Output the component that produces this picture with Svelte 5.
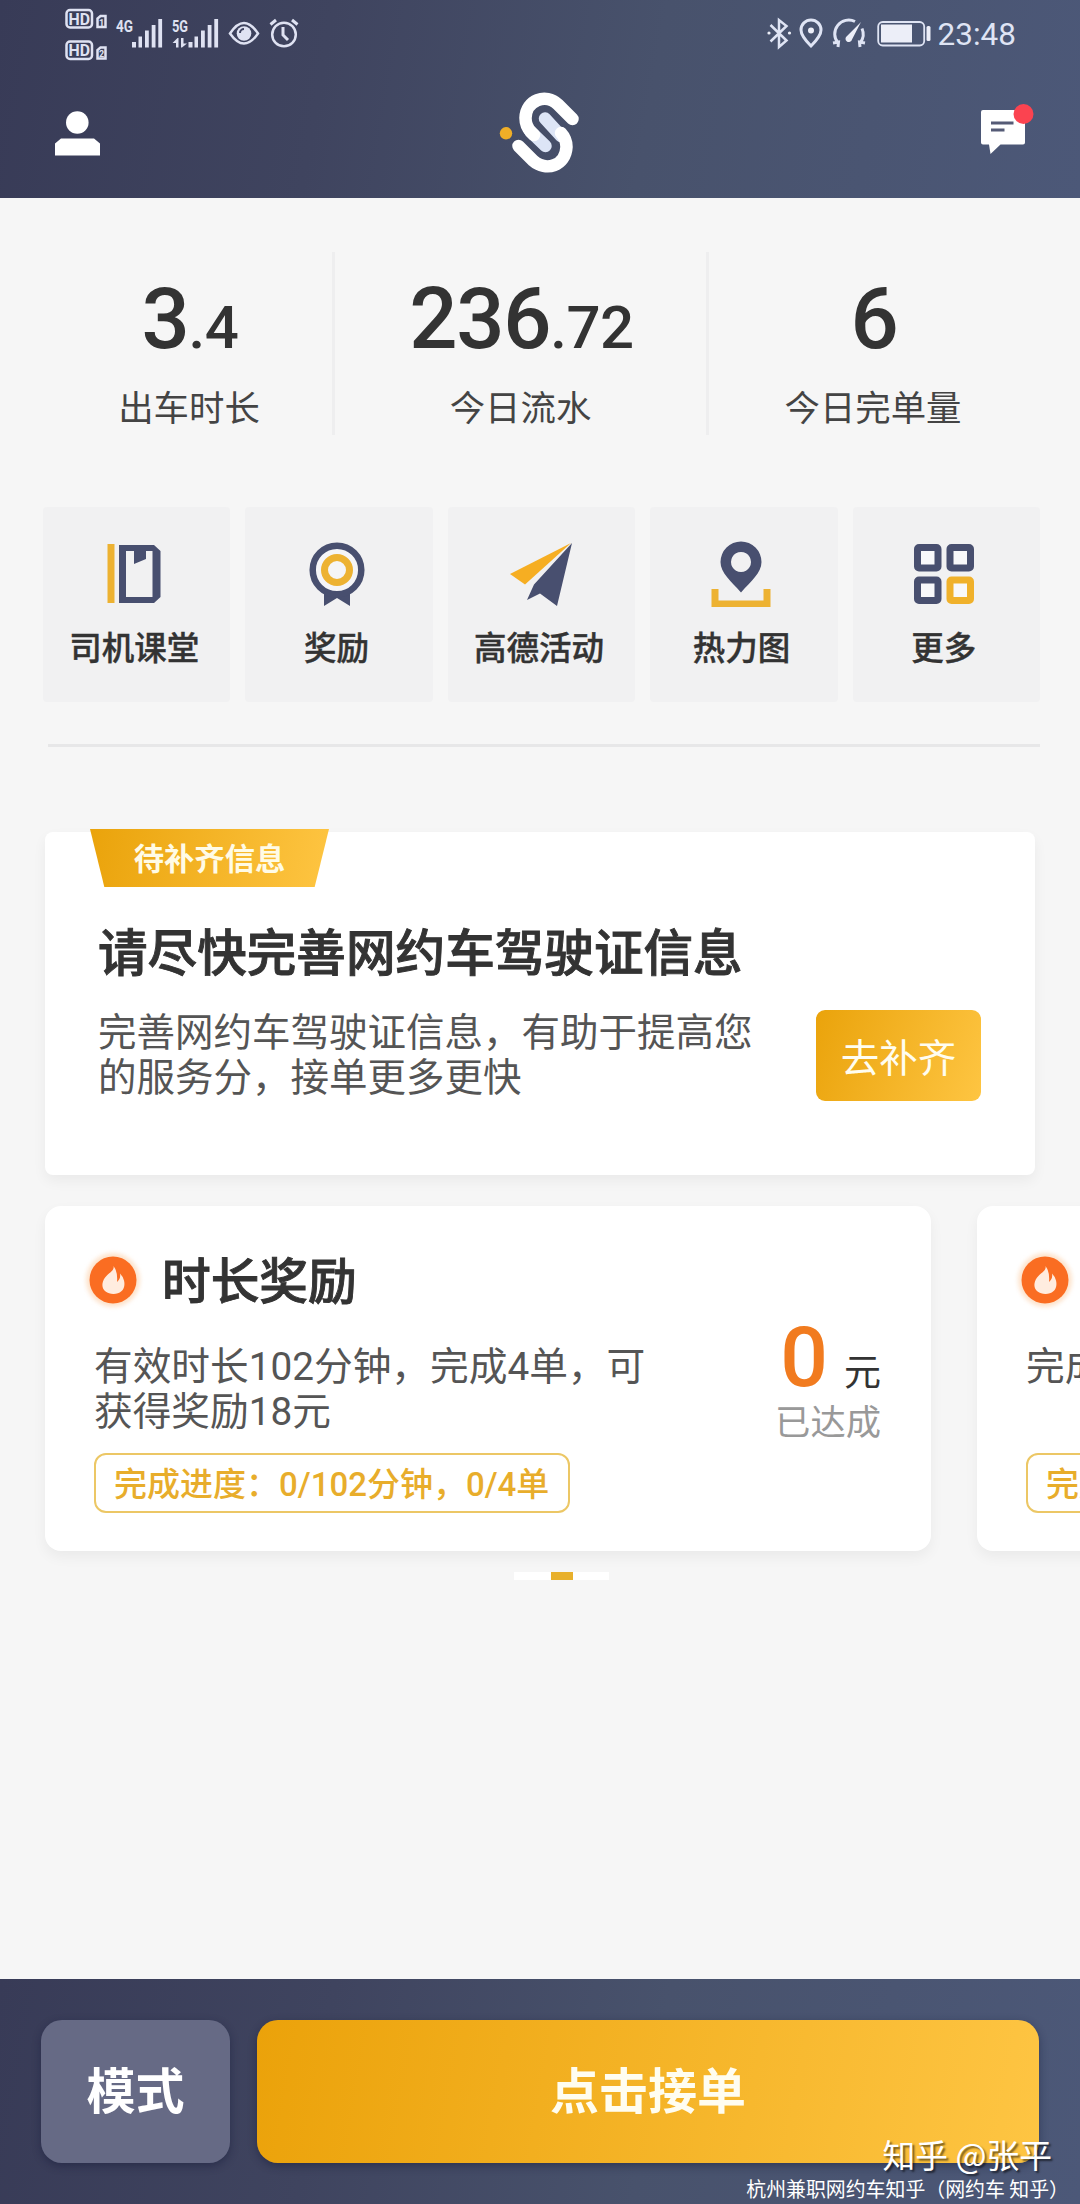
<script>
  const stats = [
    { whole: '3', rest: '.4', label: '出车时长' },
    { whole: '236', rest: '.72', label: '今日流水' },
    { whole: '6', rest: '', label: '今日完单量' }
  ];

  const menu = [
    { icon: 'book', name: '司机课堂' },
    { icon: 'award', name: '奖励' },
    { icon: 'plane', name: '高德活动' },
    { icon: 'heat', name: '热力图' },
    { icon: 'more', name: '更多' }
  ];

  const rewards = [
    {
      title: '时长奖励',
      lines: ['有效时长102分钟，完成4单，可', '获得奖励18元'],
      progress: '完成进度：0/102分钟，0/4单',
      amount: '0'
    },
    {
      title: '',
      lines: ['完成'],
      progress: '完成',
      amount: ''
    }
  ];
</script>

<div class="app">
  <header>
    <div class="status">
      <svg class="status-left" width="240" height="64" viewBox="62 0 240 64">
        <g fill="none" stroke="#dfe2f2" stroke-width="2.500">
          <rect x="66.500" y="10" width="25.500" height="17.500" rx="3.500" />
          <rect x="66.500" y="41.500" width="25.500" height="17.500" rx="3.500" />
          <path d="M97.500 27V18.500l3-2.500h5V27zM97.500 58.500V50l3-2.500h5v11z" />
        </g>
        <g fill="#dfe2f2" font-family="Roboto, sans-serif" font-weight="700">
          <text x="68.500" y="24.500" font-size="16" textLength="21.500" lengthAdjust="spacingAndGlyphs">HD</text>
          <text x="68.500" y="56" font-size="16" textLength="21.500" lengthAdjust="spacingAndGlyphs">HD</text>
          <text x="99" y="25.500" font-size="9">1</text>
          <text x="99" y="57" font-size="9">2</text>
          <text x="116" y="32" font-size="17" textLength="17" lengthAdjust="spacingAndGlyphs">4G</text>
          <text x="172" y="32" font-size="17" textLength="16" lengthAdjust="spacingAndGlyphs">5G</text>
        </g>
        <g fill="#dfe2f2">
          <path d="M132 42h4v5.500h-4zM138.500 36.500h3.500v11h-3.500zM145 30.500h3.800v17H145zM151.700 25h3.800v22.500h-3.800zM158.300 19h3.800v28.500h-3.800z" />
          <path d="M188.500 42h4v5.500h-4zM194.500 36.500h3.500v11h-3.500zM201 30.500h3.800v17H201zM207.700 25h3.800v22.500h-3.800zM214.300 19h3.800v28.500h-3.800z" />
          <path d="M176 47.500V43h-3.500l5-5h1v9.500zM181 38h2.500v5.500h3.500l-5 4h-1z" />
        </g>
        <g fill="none" stroke="#dfe2f2" stroke-width="2.500">
          <path d="M230 33.500q14-21 28 0q-14 20-28 0z" />
          <circle cx="284" cy="34.500" r="11.800" />
          <path d="M283 27v8l5 5M270.500 24.500l5.500-4.500M292 20l5.500 4.500" stroke-width="3" />
        </g>
        <circle cx="244" cy="33.500" r="7.300" fill="#dfe2f2" />
        <path d="M240 33a4 4 0 0 1 4-4" fill="none" stroke="#414562" stroke-width="2" />
      </svg>
      <div class="status-right">
        <svg width="166" height="64" viewBox="765 0 166 64">
          <g fill="none" stroke="#dfe4f4" stroke-width="2.500">
            <path d="M769.500 25l16 15.500-7.500 6.500V20l7.500 6-16 15.500" />
            <path d="M810 46q-10-10-10-16a10 10 0 0 1 20 0q0 6-10 16z" stroke-width="3" />
            <path d="M837 47l.5-5-5.500 1M837 43a14 14 0 0 1 17-21.500M861 28.500a14 14 0 0 1-2 14.500M859 47l-.5-5 5.500 1" stroke-width="3" />
            <rect x="877.200" y="22" width="46" height="23.500" rx="4.500" stroke-width="1.800" />
          </g>
          <g fill="#eceef8">
            <circle cx="768" cy="33" r="1.600" />
            <circle cx="788.500" cy="33" r="1.600" />
            <circle cx="810" cy="30.500" r="3" />
            <path d="M860 22l-9 17.500a3.300 3.300 0 1 1-5-3.500z" />
            <rect x="880" y="24.500" width="31" height="18" />
            <rect x="925.500" y="26" width="4" height="15" rx="1.500" />
          </g>
        </svg>
        <span class="clock">23:48</span>
      </div>
    </div>
    <nav>
      <svg class="user" width="46" height="46" viewBox="55 110 46 46" fill="#fff">
        <circle cx="77.300" cy="121.500" r="11.300" />
        <path d="M55 154.500v-12l6-5h33l6 5v12z" />
      </svg>
      <svg class="logo" width="82" height="84" viewBox="498 91 82 84">
        <circle cx="506" cy="133.300" r="6.200" fill="#f0ae27" />
        <g fill="none" stroke-width="12.500" stroke-linecap="round" stroke-linejoin="round">
          <path d="M545 118.500L561 136" stroke="#dde5f6" />
          <path d="M530 131L545.500 146" stroke="#dde5f6" />
          <path d="M572.500 119L558 104.500C546 93 526 100 525.500 118Q525.500 126 531 132L534 135" stroke="#fff" />
          <path d="M518.500 146L533 160.500C546 172 565.500 166 566.500 147Q566.500 139 561 133" stroke="#fff" />
        </g>
      </svg>
      <svg class="message" width="54" height="52" viewBox="980 104 54 52">
        <path d="M983 110h40a2 2 0 0 1 2 2v30.500a2 2 0 0 1-2 2h-22.500l-10 9.500-1.500-9.500h-6a2 2 0 0 1-2-2V112a2 2 0 0 1 2-2z" fill="#fff" />
        <path d="M991 123h22.500M991 130h13.500" stroke="#555b76" stroke-width="3" />
        <circle cx="1023.500" cy="114" r="10" fill="#fb4350" />
      </svg>
    </nav>
  </header>

  <main>
    <section class="stats">
      {#each stats as stat}
        <div class="stat">
          <div class="number">{stat.whole}<small>{stat.rest}</small></div>
          <p>{stat.label}</p>
        </div>
      {/each}
    </section>

    <section class="menu">
      {#each menu as item}
        <div class="menu-item">
          <svg width="68" height="68" viewBox="0 0 68 68">
            {#if item.icon === 'book'}
              <path d="M7.500 5h7v59h-7z" fill="#edb232" />
              <path d="M19 6h35l6.500 6v46L54 64H19zM26 12v46h26.500V12H46v8l-12 5V12z" fill="#484f6f" fill-rule="evenodd" />
            {:else if item.icon === 'award'}
              <path d="M21 50v17l13-8 13 8V50z" fill="#484f6f" />
              <circle cx="34" cy="31" r="24.300" fill="#f5f5f7" stroke="#484f6f" stroke-width="6.500" />
              <circle cx="34" cy="31" r="12.500" fill="none" stroke="#edb232" stroke-width="7" />
            {:else if item.icon === 'plane'}
              <path d="M5 35L66 4 20 45.500z" fill="#f6ae22" />
              <path d="M67 4L52 67 35 54.500 22 61l7-15.500z" fill="#484f6f" />
            {:else if item.icon === 'heat'}
              <path d="M34 53.500C24 42 13.500 34 13.500 23a20.500 20.500 0 0 1 41 0C54.500 34 44 42 34 53.500zM34 13a10 10 0 1 0 .01 0z" fill="#484f6f" fill-rule="evenodd" />
              <path d="M8 50v15h52V50" fill="none" stroke="#edb232" stroke-width="7" />
            {:else}
              <g fill="#f8f8fa" stroke="#484f6f" stroke-width="7">
                <rect x="7.500" y="8.500" width="20.500" height="20.500" rx="1.500" />
                <rect x="40" y="8.500" width="20.500" height="20.500" rx="1.500" />
                <rect x="7.500" y="41" width="20.500" height="20.500" rx="1.500" />
                <rect x="40" y="41" width="20.500" height="20.500" rx="1.500" stroke="#f0b12b" />
              </g>
            {/if}
          </svg>
          <span>{item.name}</span>
        </div>
      {/each}
    </section>

    <section class="notice">
      <div class="ribbon">待补齐信息</div>
      <h2>请尽快完善网约车驾驶证信息</h2>
      <div class="notice-row">
        <p>完善网约车驾驶证信息，有助于提高您<br />的服务分，接单更多更快</p>
        <button class="fill-in">去补齐</button>
      </div>
    </section>

    <section class="rewards">
      {#each rewards as reward}
        <article class="reward">
          <div class="reward-text">
            <h3>
              <svg width="64" height="64" viewBox="0 0 64 64">
                <circle class="glow" cx="32" cy="32" r="27" fill="#fde3cc" />
                <circle cx="32" cy="32" r="23.500" fill="#fa6d22" />
                <path d="M32.500 18C34 24 25 25 22 33.500 19.500 41 25 46 32.500 46S45 41 43 32.500Q42 28.500 39 25.500 40 31 36 34 37 24 32.500 18z" fill="#ffecdf" />
              </svg>
              <span>{reward.title}</span>
            </h3>
            <p>
              {#each reward.lines as line}
                <span>{line}</span>
              {/each}
            </p>
            <div class="progress" class:cut={!reward.amount}>{reward.progress}</div>
          </div>
          {#if reward.amount}
            <div class="amount">
              <div><b>{reward.amount}</b><span>元</span></div>
              <small>已达成</small>
            </div>
          {/if}
        </article>
      {/each}
    </section>
    <div class="pager"><i></i></div>
  </main>

  <footer>
    <button class="mode">模式</button>
    <button class="start">点击接单</button>
    <div class="watermark">
      <span class="author">知乎 @张平</span>
      <span class="source">杭州兼职网约车知乎（网约车 知乎）</span>
    </div>
  </footer>
</div>

<style>
  :global(body) {
    margin: 0;
    background: #f6f6f6;
  }

  .app {
    width: 1080px;
    height: 2204px;
    display: flex;
    flex-direction: column;
    overflow: hidden;
    background: #f6f6f6;
    color: #333;
    font-family: Roboto, 'Noto Sans CJK SC', sans-serif;
  }

  h2, h3, p {
    margin: 0;
    font-weight: 500;
  }

  h2, h3 {
    -webkit-text-stroke: 0.9px #333;
  }

  svg {
    display: block;
    flex-shrink: 0;
  }

  button {
    border: 0;
    padding: 0;
    color: #fffdf0;
    font-family: inherit;
  }

  header {
    height: 198px;
    flex-shrink: 0;
    background: linear-gradient(100deg, #383b57 0%, #3f445f 30%, #48526c 60%, #4c5878 100%);
  }

  .status {
    height: 64px;
    display: flex;
    justify-content: space-between;
    padding: 0 64px 0 62px;
  }

  .status-right {
    display: flex;
    gap: 6px;
  }

  .clock {
    color: #dfe4f4;
    font-size: 31.5px;
    line-height: 69px;
  }

  nav {
    height: 134px;
    display: grid;
    grid-template-columns: 1fr 82px 1fr;
    align-items: center;
    padding: 0 46px 0 55px;
  }

  .user {
    margin-top: 5px;
  }

  .logo {
    margin: 3px 0 0 -6px;
  }

  .message {
    justify-self: end;
    margin-top: -2px;
  }

  main {
    height: 1781px;
    flex-shrink: 0;
    overflow: hidden;
  }

  .stats {
    height: 181px;
    display: grid;
    grid-template-columns: 288px 374px 331px;
    padding: 54px 0 0 46px;
    text-align: center;
  }

  .stat + .stat {
    border-left: 3px solid #eeeeef;
    margin-left: -2px;
  }

  .number {
    height: 106px;
    padding-top: 14px;
    box-sizing: border-box;
    font-size: 85px;
    font-weight: 500;
    line-height: 106px;
    letter-spacing: -1.3px;
  }

  .number small {
    font-size: 60px;
    letter-spacing: -0.5px;
  }

  .stat p {
    margin-top: 25px;
    margin-right: 2px;
    color: #444;
    font-size: 35.4px;
    font-weight: 400;
    line-height: 52px;
  }

  .menu {
    display: grid;
    grid-template-columns: repeat(5, 1fr);
    gap: 15px;
    margin: 74px 40px 0 43px;
  }

  .menu-item {
    height: 195px;
    display: flex;
    flex-direction: column;
    align-items: center;
    box-sizing: border-box;
    padding: 32px 5px 0 0;
    background: #f1f1f2;
    border-radius: 4px;
  }

  .menu-item span {
    margin-top: 18px;
    font-size: 32.5px;
    font-weight: 500;
    line-height: 48px;
    -webkit-text-stroke: 0.4px #333;
  }

  .notice {
    height: 343px;
    margin: 130px 45px 0;
    box-sizing: border-box;
    padding: 0 54px 0 53px;
    position: relative;
    background: #fff;
    border-radius: 8px;
    box-shadow: 0 6px 14px rgba(0, 0, 0, 0.05);
  }

  /* separator between the shortcuts and the cards */
  .notice::before {
    content: '';
    position: absolute;
    left: 3px;
    right: -5px;
    top: -88px;
    height: 3px;
    background: #e7e7e8;
  }

  .ribbon {
    width: 239px;
    height: 58px;
    position: absolute;
    top: -3px;
    left: 45px;
    clip-path: polygon(0 0, 100% 0, 94% 100%, 6% 100%);
    background: linear-gradient(100deg, #eaa30b, #fec542);
    color: #fffbe6;
    font-size: 30.3px;
    font-weight: 700;
    line-height: 62px;
    text-align: center;
  }

  h2 {
    padding-top: 86px;
    font-size: 49.6px;
    line-height: 72px;
  }

  .notice-row {
    display: flex;
    justify-content: space-between;
    margin-top: 20px;
  }

  .notice-row p, .reward p {
    color: #555;
    font-size: 38.5px;
    font-weight: 400;
    line-height: 45px;
  }

  .fill-in {
    width: 165px;
    height: 91px;
    padding-bottom: 2px;
    background: linear-gradient(110deg, #eaa30b, #fec542);
    border-radius: 9px;
    font-size: 38.5px;
  }

  .rewards {
    display: flex;
    gap: 46px;
    margin: 31px 0 0 45px;
  }

  .reward {
    width: 886px;
    height: 345px;
    flex-shrink: 0;
    display: flex;
    justify-content: space-between;
    box-sizing: border-box;
    padding: 42px 50px 0 49px;
    background: #fff;
    border-radius: 16px;
    box-shadow: 0 6px 14px rgba(0, 0, 0, 0.05);
  }

  h3 {
    height: 64px;
    display: flex;
    align-items: center;
    gap: 17px;
    margin-left: -13px;
    font-size: 48.7px;
    line-height: 64px;
  }

  h3 span {
    padding-top: 5px;
  }

  .glow {
    filter: blur(2px);
  }

  .reward p {
    height: 90px;
    margin-top: 32px;
    font-size: 38.7px;
    white-space: nowrap;
  }

  .reward p span {
    display: block;
  }

  .progress {
    width: max-content;
    height: 60px;
    box-sizing: border-box;
    margin-top: 19px;
    padding: 0 19px 0 18px;
    border: 2px solid #ecc765;
    border-radius: 12px;
    color: #e8ad2b;
    font-size: 33px;
    font-weight: 500;
    line-height: 59px;
  }

  .progress.cut {
    width: 320px;
  }

  .amount {
    padding-top: 62px;
    text-align: right;
  }

  .amount div {
    height: 96px;
    line-height: 96px;
    white-space: nowrap;
  }

  .amount b {
    color: #f17b1f;
    font-size: 84px;
    font-weight: 500;
  }

  .amount span {
    margin-left: 16px;
    font-size: 37px;
  }

  .amount small {
    display: block;
    margin-top: -5px;
    color: #999;
    font-size: 35.3px;
    line-height: 44px;
  }

  .pager {
    width: 95px;
    height: 8px;
    display: flex;
    justify-content: center;
    margin: 21px 0 0 514px;
    background: #fff;
  }

  .pager i {
    width: 22px;
    background: #e8b02c;
  }

  footer {
    height: 225px;
    flex-shrink: 0;
    display: flex;
    gap: 27px;
    align-items: flex-start;
    box-sizing: border-box;
    padding: 41px 41px 0;
    position: relative;
    background: linear-gradient(100deg, #383b57 0%, #3f445f 30%, #48526c 60%, #4c5878 100%);
  }

  footer button {
    height: 143px;
    padding-bottom: 8px;
    border-radius: 21px;
    box-shadow: 0 3px 8px rgba(20, 25, 55, 0.45);
    font-size: 49px;
    font-weight: 700;
  }

  .mode {
    width: 189px;
    background: #666a85;
    color: #fff;
  }

  .start {
    flex: 1;
    background: linear-gradient(100deg, #eba20a, #fec543);
  }

  .watermark {
    position: absolute;
    right: 11px;
    bottom: 2px;
    display: flex;
    flex-direction: column;
    align-items: flex-end;
    color: #fff;
    font-family: 'Noto Sans CJK SC', sans-serif;
  }

  .author {
    margin-right: 17px;
    font-size: 32.8px;
    line-height: 42px;
    text-shadow: 2px 2px 2px rgba(0, 0, 0, 0.55);
  }

  .source {
    font-size: 19.9px;
    line-height: 27px;
  }
</style>
